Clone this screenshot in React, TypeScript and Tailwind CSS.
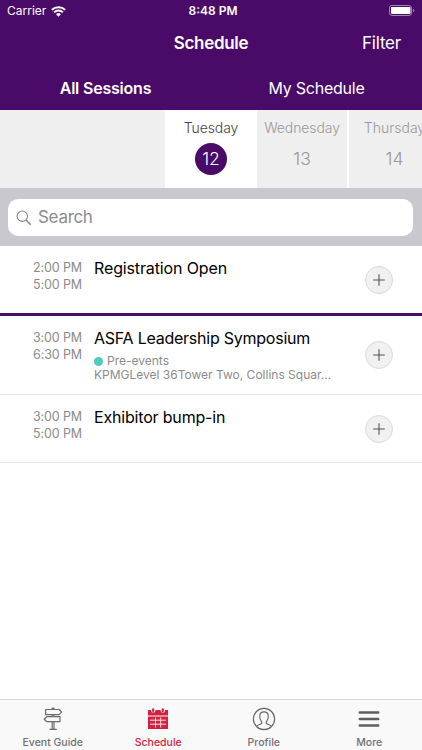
import React from "react";

const font = "font-['Inter','Liberation_Sans',sans-serif]";

function WifiIcon() {
  return (
    <svg width="15" height="11" viewBox="0 0 15 11" fill="none" stroke="#fff" strokeWidth="2">
      <path d="M.8 3.900a9.600 9.600 0 0 1 13.400 0" />
      <path d="M3.100 6.400a6.200 6.200 0 0 1 8.800 0" />
      <path d="M7.500 10.800 5 8.300a3.500 3.500 0 0 1 5 0Z" fill="#fff" stroke="none" />
    </svg>
  );
}

function BatteryIcon() {
  return (
    <svg width="27" height="12" viewBox="0 0 27 12" fill="none">
      <rect x="1.500" y="0.500" width="22" height="10" rx="2.600" stroke="#a088b5" />
      <rect x="3" y="2" width="19.500" height="7" rx="1.100" fill="#fff" />
      <path d="M25 3.700v3.600c.8-.3 1.300-1 1.300-1.800s-.5-1.500-1.300-1.800Z" fill="#a088b5" />
    </svg>
  );
}

function SignpostIcon() {
  return (
    <svg width="20" height="24" viewBox="0 0 20 24" fill="none" stroke="#6b6b6b" strokeWidth="1.2" strokeLinejoin="round">
      <path d="M9.200 2.400V1.200h1.800v1.200M9.200 7.800v2M11 7.800v2M9.200 14.800v7.400M11 14.800v7.400M6.400 22.300h7.400" />
      <path d="M2.600 2.500h13.600l2.500 2.600-2.500 2.600H2.600Z" />
      <path d="M17 9.700H3.800L1.200 12.200l2.600 2.500H17Z" />
    </svg>
  );
}

function CalendarIcon() {
  return (
    <svg width="22" height="22" viewBox="0 0 22 22" fill="none">
      <path d="M1 2h20v5.600H1Z M1 8.400h20V21H1Z" fill="#d3213f" />
      <path d="M1 8h20" stroke="#e98b99" strokeWidth="0.800" />
      <circle cx="6.200" cy="2.400" r="2.200" fill="#f9f9f9" />
      <circle cx="15.800" cy="2.400" r="2.200" fill="#f9f9f9" />
      <path d="M6.200 1.300v1.800M15.800 1.300v1.800" stroke="#d3213f" strokeWidth="2.200" strokeLinecap="round" />
      <path d="M3 12.200h16M3 16.200h16M8.500 9.500v10M13.700 9.500v10" stroke="#fbe3e6" strokeWidth="1" />
    </svg>
  );
}

function ProfileIcon() {
  return (
    <svg width="24" height="24" viewBox="0 0 24 24" fill="none" stroke="#666" strokeWidth="1.150" strokeLinejoin="round">
      <circle cx="12" cy="12" r="10.600" />
      <path d="M4.400 19.300c1.300-1.200 3-1.800 4.400-2.300 1.100-.4 1.300-1.400.8-2.200C8.500 13.400 7.700 11.600 7.700 9.300 7.700 6.700 9.500 4.900 12 4.900s4.300 1.800 4.300 4.400c0 2.300-.8 4.100-1.900 5.500-.5.800-.3 1.800.8 2.200 1.400.5 3.100 1.100 4.400 2.300" />
    </svg>
  );
}

function MenuIcon() {
  return (
    <svg width="22" height="18" viewBox="0 0 22 18" stroke="#5f5f5f" strokeWidth="2.500" strokeLinecap="round">
      <path d="M1.800 2.500h18.400M1.800 9h18.400M1.800 15.500h18.400" />
    </svg>
  );
}

function AddButton() {
  return (
    <button aria-label="Add" className="flex size-7 items-center justify-center rounded-full border border-[#dadada] bg-[#f1f1f1]">
      <svg width="12" height="12" viewBox="0 0 12 12" stroke="#555" strokeWidth="1.100">
        <path d="M6 .2v11.600M.2 6h11.600" />
      </svg>
    </button>
  );
}

interface SessionProps {
  start: string;
  end: string;
  title: string;
  titleClass: string;
  rowClass: string;
  children?: React.ReactNode;
}

function Session({ start, end, title, titleClass, rowClass, children }: SessionProps) {
  return (
    <li className={`flex ${rowClass}`}>
      <div className="w-[82px] shrink-0 pt-[13px] text-right text-[12.5px] leading-[17px] tracking-[-0.12px] text-[#8b8b8b]">
        <div>{start}</div>
        <div>{end}</div>
      </div>
      <div className="w-[271px] shrink-0 pt-3 pl-3 whitespace-nowrap">
        <h2 className={`text-[16px] leading-5 text-black ${titleClass}`}>{title}</h2>
        {children}
      </div>
      <div className="flex items-center pl-3">
        <AddButton />
      </div>
    </li>
  );
}

export default function App() {
  return (
    <div className={`flex h-[750px] w-[422px] flex-col overflow-hidden bg-white ${font}`}>
      <header className="h-[110px] shrink-0 bg-[#490a68] text-white">
        <div className="grid h-[22px] grid-cols-3 items-center px-[7px] text-[12px]">
          <div className="flex items-center gap-[5px]">
            <span>Carrier</span>
            <WifiIcon />
          </div>
          <div className="pl-1 text-center font-semibold">8:48 PM</div>
          <div className="flex justify-end">
            <BatteryIcon />
          </div>
        </div>
        <div className="grid h-11 grid-cols-3 items-center text-[17px]">
          <span />
          <h1 className="text-center font-semibold tracking-[-0.3px]">Schedule</h1>
          <span className="pr-[21px] text-right tracking-[-0.2px]">Filter</span>
        </div>
        <div className="grid h-11 grid-cols-2 items-center text-center text-[16px]">
          <span className="font-semibold tracking-[-0.2px]">All Sessions</span>
          <span className="tracking-[-0.25px]">My Schedule</span>
        </div>
      </header>

      <div className="flex h-[78px] shrink-0 overflow-hidden bg-[#efefef] text-center text-[14px] font-light text-[#999]">
        <div className="w-[165px] shrink-0" />
        <div className="flex w-[92px] shrink-0 flex-col items-center bg-white pt-2 text-[#444]">
          <span className="leading-5 tracking-[-0.1px]">Tuesday</span>
          <span className="mt-[5px] flex size-8 items-center justify-center rounded-full bg-[#490a68] text-[17.5px] text-white">12</span>
        </div>
        <div className="flex w-[92px] shrink-0 flex-col items-center border-r-2 border-white pt-2">
          <span className="leading-5 tracking-[-0.1px]">Wednesday</span>
          <span className="mt-[5px] text-[17.5px] leading-8">13</span>
        </div>
        <div className="flex w-[91px] shrink-0 flex-col items-center pt-2">
          <span className="leading-5">Thursday</span>
          <span className="mt-[5px] text-[17.5px] leading-8">14</span>
        </div>
      </div>

      <div className="h-[58px] shrink-0 bg-[#c9c8cf] px-2 pt-[11px]">
        <div className="flex h-[37px] w-[405px] items-center gap-[6px] rounded-[10px] bg-white pl-2 text-[17px] tracking-[-0.3px] text-[#8b8b8e]">
          <svg width="16" height="16" viewBox="0 0 16 16" fill="none" stroke="#828286" strokeWidth="1.100">
            <circle cx="6.300" cy="6.200" r="5.200" />
            <path d="m10 10 4.700 4.700" strokeWidth="1.500" />
          </svg>
          Search
        </div>
      </div>

      <ul className="flex-1">
        <Session start="2:00 PM" end="5:00 PM" title="Registration Open" titleClass="tracking-[-0.13px]" rowClass="h-[70px] border-b-[3px] border-[#490a68]" />
        <Session start="3:00 PM" end="6:30 PM" title="ASFA Leadership Symposium" titleClass="tracking-[-0.24px]" rowClass="h-[79px] border-b border-[#e6e6e6]">
          <div className="mt-[6px] text-[12px] leading-[14px] text-[#8b8b8b]">
            <div className="flex items-center gap-1">
              <span className="size-[9px] rounded-full bg-[#4eccbf]" />
              Pre-events
            </div>
            <div>KPMGLevel 36Tower Two, Collins Squar...</div>
          </div>
        </Session>
        <Session start="3:00 PM" end="5:00 PM" title="Exhibitor bump-in" titleClass="tracking-[-0.18px]" rowClass="h-[68px] border-b border-[#e6e6e6]" />
      </ul>

      <nav className="grid h-[51px] shrink-0 grid-cols-4 border-t border-[#d9d9d9] bg-[#f9f9f9] text-[10.500px] font-medium text-[#707070]">
        <div className="flex flex-col items-center pt-[7px]">
          <SignpostIcon />
          <span className="mt-1 leading-4">Event Guide</span>
        </div>
        <div className="flex flex-col items-center pt-2 text-[#d3213f]">
          <CalendarIcon />
          <span className="mt-[5px] leading-4">Schedule</span>
        </div>
        <div className="flex flex-col items-center pt-[7px]">
          <ProfileIcon />
          <span className="mt-1 leading-4">Profile</span>
        </div>
        <div className="flex flex-col items-center pt-[10px]">
          <MenuIcon />
          <span className="mt-[7px] leading-4">More</span>
        </div>
      </nav>
    </div>
  );
}
